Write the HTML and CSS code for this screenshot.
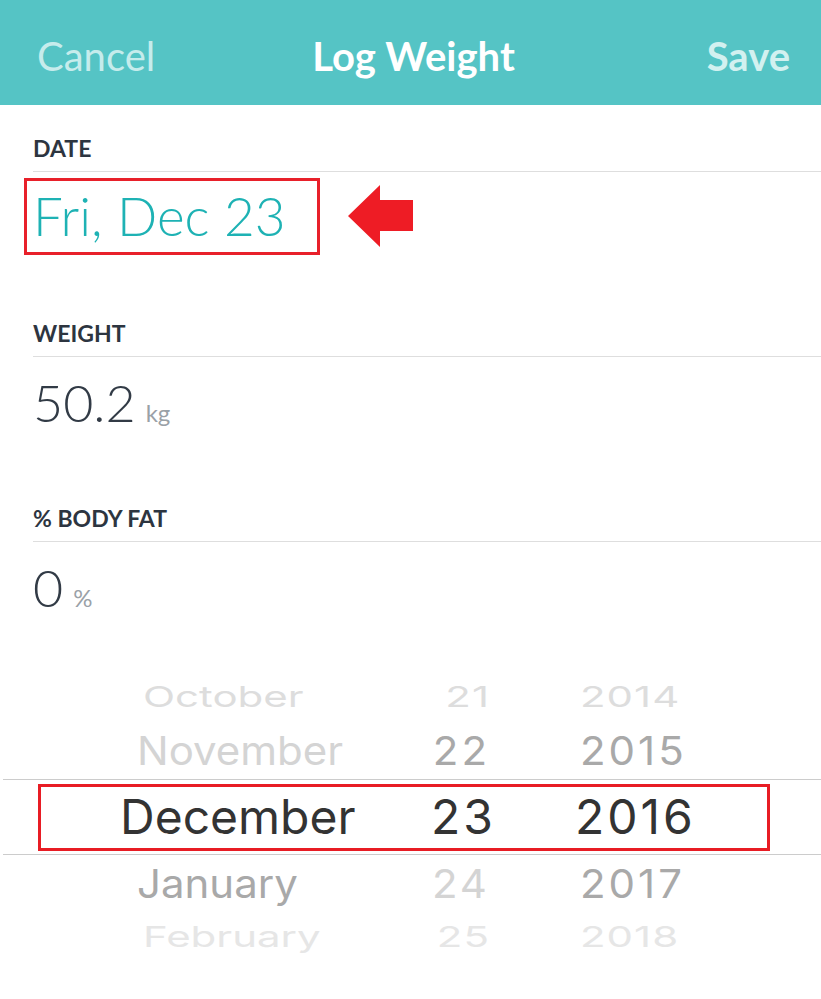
FILE: index.html
```html
<!DOCTYPE html>
<html lang="en">
<head>
  <meta charset="UTF-8">
  <meta name="viewport" content="width=device-width, initial-scale=1.0">
  <title>Log Weight</title>
  <link rel="stylesheet" href="styles.css">
</head>
<body>
  <div class="header">
    <span class="header-btn cancel">Cancel</span>
    <span class="header-title">Log Weight</span>
    <span class="header-btn save">Save</span>
  </div>

  <div class="section">
    <div class="section-label">DATE</div>
    <div class="section-value date-value">
      <div class="date-box">Fri, Dec 23</div>
      <svg class="arrow" width="65" height="62" viewBox="0 0 65 62">
        <polygon points="0,31 32,0 32,15 65,15 65,46 32,46 32,62" fill="#ee1c25"/>
      </svg>
    </div>
  </div>

  <div class="section">
    <div class="section-label">WEIGHT</div>
    <div class="section-value">
      <span class="number">50.2</span>
      <span class="unit">kg</span>
    </div>
  </div>

  <div class="section">
    <div class="section-label">% BODY FAT</div>
    <div class="section-value">
      <span class="number">0</span>
      <span class="unit">%</span>
    </div>
  </div>

  <div class="picker">
    <div class="picker-row far top">
      <span class="month">October</span><span class="day">21</span><span class="year">2014</span>
    </div>
    <div class="picker-row near top">
      <span class="month light">November</span><span class="day">22</span><span class="year">2015</span>
    </div>
    <div class="picker-row selected">
      <span class="month">December</span><span class="day">23</span><span class="year">2016</span>
      <div class="highlight"></div>
    </div>
    <div class="picker-row near bottom">
      <span class="month">January</span><span class="day light">24</span><span class="year">2017</span>
    </div>
    <div class="picker-row far bottom">
      <span class="month">February</span><span class="day">25</span><span class="year">2018</span>
    </div>
  </div>
</body>
</html>
```

FILE: styles.css
```css
body {
  margin: 0;
  padding: 0;
  background-color: #ffffff;
  font-family: "Lato", "Open Sans", sans-serif;
  color: #2f3842;
}

.header {
  height: 105px;
  box-sizing: border-box;
  padding: 6px 31px 0 37px;
  display: grid;
  grid-template-columns: 1fr auto 1fr;
  align-items: center;
  background-color: #55c4c5;
  font-size: 40px;
}
.header-btn {
  color: #c6ecec;
}
.cancel {
  font-weight: 400;
}
.save {
  text-align: right;
  font-weight: 700;
  color: #d2f1f0;
}
.header-title {
  color: #ffffff;
  font-weight: 700;
}

.section {
  padding-left: 33px;
}
.section-label {
  padding-top: 29px;
  padding-bottom: 9px;
  line-height: 28px;
  font-size: 23px;
  font-weight: 700;
  color: #2d3540;
  border-bottom: 1px solid #dedede;
}
.section-value {
  height: 118px;
  display: flex;
  align-items: baseline;
}

.date-value {
  align-items: flex-start;
}
.date-box {
  margin-top: 6px;
  margin-left: -9px;
  width: 296px;
  height: 77px;
  box-sizing: border-box;
  padding: 3px 0 0 6px;
  border: 3px solid #e8202a;
  font-size: 53px;
  line-height: 64px;
  font-weight: 300;
  color: #1eb2b4;
  white-space: nowrap;
}
.arrow {
  margin-left: 28px;
  margin-top: 13px;
}

.number {
  padding-top: 13px;
  font-size: 52px;
  line-height: 64px;
  font-weight: 300;
  color: #323b46;
}
.unit {
  margin-left: 10px;
  font-size: 24px;
  color: #9aa1a7;
}

.picker {
  padding-top: 12px;
  font-family: "Inter", "Liberation Sans", sans-serif;
}
.picker-row {
  display: grid;
  grid-template-columns: 400px 90px 1fr;
  white-space: nowrap;
}
.picker-row span {
  display: block;
}
.month {
  padding-left: 137px;
}
.day {
  text-align: right;
  letter-spacing: 3px;
}
.year {
  padding-left: 90px;
  letter-spacing: 3px;
}
.picker-row.far {
  height: 50px;
  line-height: 50px;
  font-size: 42px;
  color: #dddddd;
}
.picker-row.far span {
  transform: scaleY(0.69);
  letter-spacing: 1px;
}
.picker-row.far .month {
  padding-left: 143px;
  letter-spacing: 0;
}
.picker-row.far.bottom {
  height: 48px;
  line-height: 48px;
  color: #e6e6e6;
}
.picker-row.near {
  height: 57px;
  line-height: 57px;
  font-size: 42px;
  color: #a9a9a9;
}
.picker-row.near span {
  transform: scaleY(0.94);
}
.picker-row.near.bottom {
  height: 58px;
  line-height: 58px;
}
.picker-row .light {
  color: #d4d4d4;
}
.picker-row.selected {
  position: relative;
  height: 74px;
  line-height: 74px;
  margin-left: 3px;
  grid-template-columns: 397px 96px 1fr;
  border-top: 1px solid #cccccc;
  border-bottom: 1px solid #cccccc;
  font-size: 48px;
  color: #333333;
}
.picker-row.selected .month {
  padding-left: 117px;
}
.picker-row.selected .year {
  padding-left: 79px;
}
.highlight {
  position: absolute;
  left: 35px;
  top: 4px;
  width: 732px;
  height: 67px;
  box-sizing: border-box;
  border: 3px solid #e81c24;
}
```
